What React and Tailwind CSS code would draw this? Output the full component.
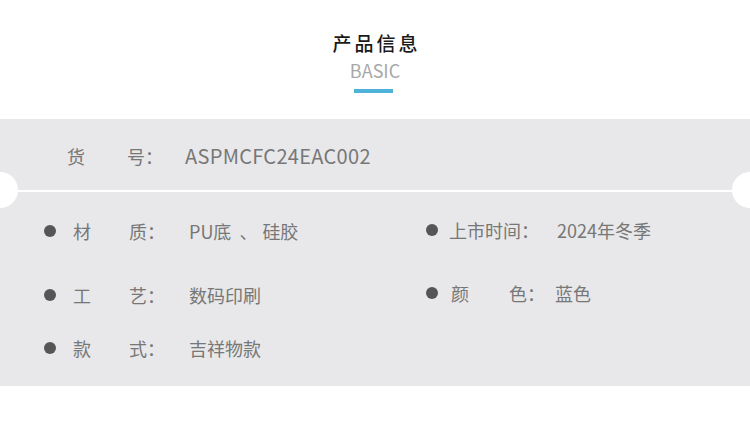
import React from "react";

const font = { fontFamily: '"Noto Sans CJK SC", "Noto Sans", sans-serif' };

export default function App() {
  return (
    <div className="w-[750px] h-[433px] bg-white overflow-hidden" style={font}>
      {/* Header */}
      <div className="h-[119px] flex flex-col items-center pt-[30px]">
        <div className="text-[19px] leading-[26px] tracking-[3px] text-[#1a1a1a] font-medium pl-[3px]">产品信息</div>
        <div className="text-[18px] leading-[24px] text-[#a8a8a8] mt-[2px]">BASIC</div>
        <div className="w-[39px] h-[4px] bg-[#4fb3d9] mt-[7px] -ml-[3px]" />
      </div>

      {/* Info panel */}
      <div className="relative bg-[#e8e8ea] h-[267px] text-[18px] text-[#777] overflow-hidden">
        <div className="h-[71px] flex items-center pl-[67px] pt-[3px]">
          <span>货</span>
          <span className="w-[42px]" />
          <span>号：</span>
          <span className="ml-[22px] text-[20px] tracking-[0.3px]">ASPMCFC24EAC002</span>
        </div>
        <div className="h-[2px] bg-white" />
        <div className="absolute left-[-18px] top-[53px] w-[36px] h-[36px] rounded-full bg-white" />
        <div className="absolute right-[-18px] top-[53px] w-[36px] h-[36px] rounded-full bg-white" />

        <div className="flex pl-[44px] pt-[27px]">
          <div className="w-[382px] flex flex-col">
            <div className="flex items-center h-[24px]">
              <span className="w-[12px] h-[12px] rounded-full bg-[#555] mr-[17px]" />
              <span className="w-[56px]">材</span>
              <span className="w-[60px]">质：</span>
              <span>PU底</span>
              <span className="ml-[8px]">、</span>
              <span className="ml-[5px]">硅胶</span>
            </div>
            <div className="flex items-center h-[24px] mt-[40px]">
              <span className="w-[12px] h-[12px] rounded-full bg-[#555] mr-[17px]" />
              <span className="w-[56px]">工</span>
              <span className="w-[60px]">艺：</span>
              <span>数码印刷</span>
            </div>
            <div className="flex items-center h-[24px] mt-[29px]">
              <span className="w-[12px] h-[12px] rounded-full bg-[#555] mr-[17px]" />
              <span className="w-[56px]">款</span>
              <span className="w-[60px]">式：</span>
              <span>吉祥物款</span>
            </div>
          </div>
          <div className="flex flex-col -mt-[1px]">
            <div className="flex items-center h-[24px]">
              <span className="w-[12px] h-[12px] rounded-full bg-[#555] mr-[11px]" />
              <span className="w-[108px]">上市时间：</span>
              <span>2024年冬季</span>
            </div>
            <div className="flex items-center h-[24px] mt-[39px]">
              <span className="w-[12px] h-[12px] rounded-full bg-[#555] mr-[13px]" />
              <span className="w-[58px]">颜</span>
              <span className="w-[46px]">色：</span>
              <span>蓝色</span>
            </div>
          </div>
        </div>
      </div>
    </div>
  );
}
